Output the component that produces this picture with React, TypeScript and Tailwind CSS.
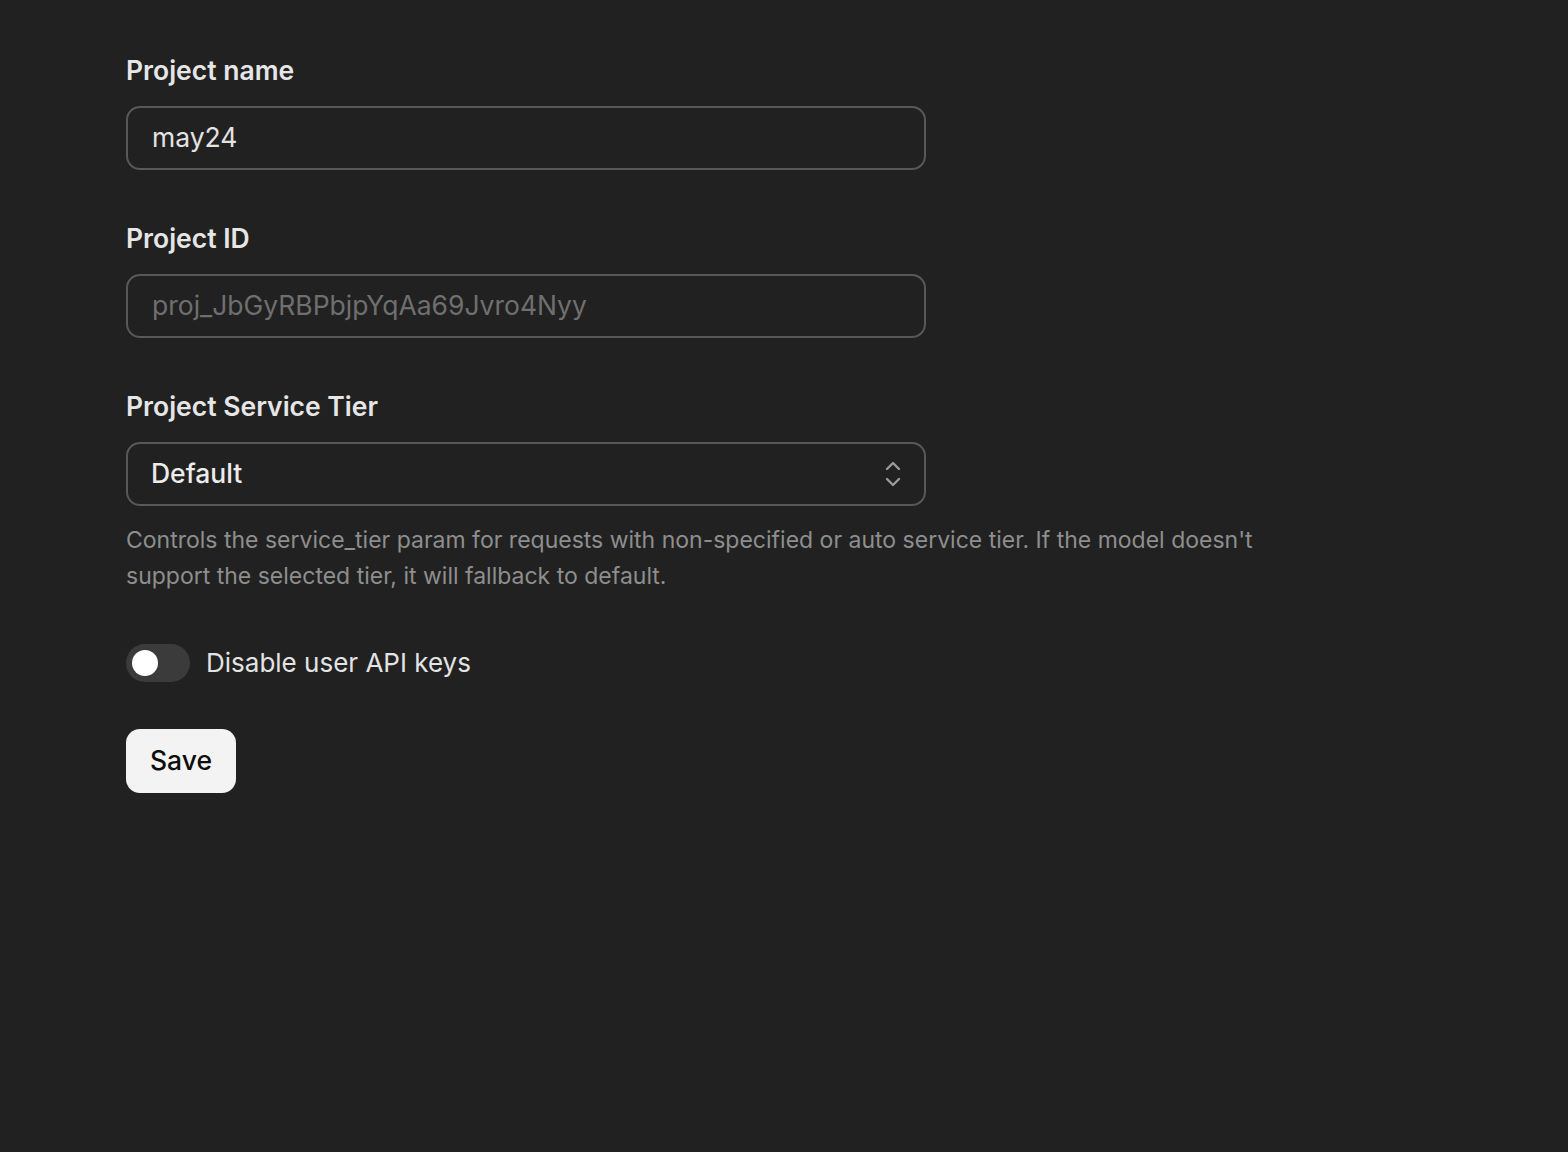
import React from "react";

export default function App() {
  return (
    <div className="min-h-[1152px] w-full bg-[#212121] text-[#ececec]" style={{ fontFamily: "Inter, 'Noto Sans', sans-serif" }}>
      <div className="pl-[126px] pt-[52px] flex flex-col">
        <label className="text-[26.5px] leading-[36px] font-semibold text-[#e6e6e6]">Project name</label>
        <div className="mt-[18px] w-[800px] h-[64px] rounded-[14px] border-2 border-[#585858] flex items-center pl-[24px]">
          <span className="text-[26.5px] text-[#e3e3e3]">may24</span>
        </div>

        <label className="mt-[50px] text-[26.5px] leading-[36px] font-semibold text-[#e6e6e6]">Project ID</label>
        <div className="mt-[18px] w-[800px] h-[64px] rounded-[14px] border-2 border-[#585858] flex items-center pl-[24px]">
          <span className="text-[26.5px] text-[#6f6f6f]">proj_JbGyRBPbjpYqAa69Jvro4Nyy</span>
        </div>

        <label className="mt-[50px] text-[26.5px] leading-[36px] font-semibold text-[#e6e6e6]">Project Service Tier</label>
        <div className="mt-[18px] w-[800px] h-[64px] rounded-[14px] border-2 border-[#585858] flex items-center pl-[23px] pr-[22px] justify-between">
          <span className="text-[26.5px] font-medium text-[#ececec]">Default</span>
          <svg width="18" height="28" viewBox="0 0 18 28" fill="none" stroke="#9a9a9a" strokeWidth="2.4" strokeLinecap="round" strokeLinejoin="round">
            <path d="M3 9 L9 3 L15 9" />
            <path d="M3 19 L9 25 L15 19" />
          </svg>
        </div>
        <p className="mt-[16px] w-[1170px] text-[23px] leading-[36px] text-[#8e8e8e]">
          Controls the service_tier param for requests with non-specified or auto service tier. If the model doesn't support the selected tier, it will fallback to default.
        </p>

        <div className="mt-[49px] flex items-center gap-[16px]">
          <div className="w-[64px] h-[38px] rounded-full bg-[#3b3b3b] flex items-center pl-[6px]">
            <div className="w-[26px] h-[26px] rounded-full bg-white" />
          </div>
          <span className="text-[26px] text-[#e3e3e3]">Disable user API keys</span>
        </div>

        <button className="mt-[47px] w-[110px] h-[64px] rounded-[14px] bg-[#f3f3f3] text-[26.5px] font-medium text-[#0d0d0d] flex items-center justify-center">
          Save
        </button>
      </div>
    </div>
  );
}
